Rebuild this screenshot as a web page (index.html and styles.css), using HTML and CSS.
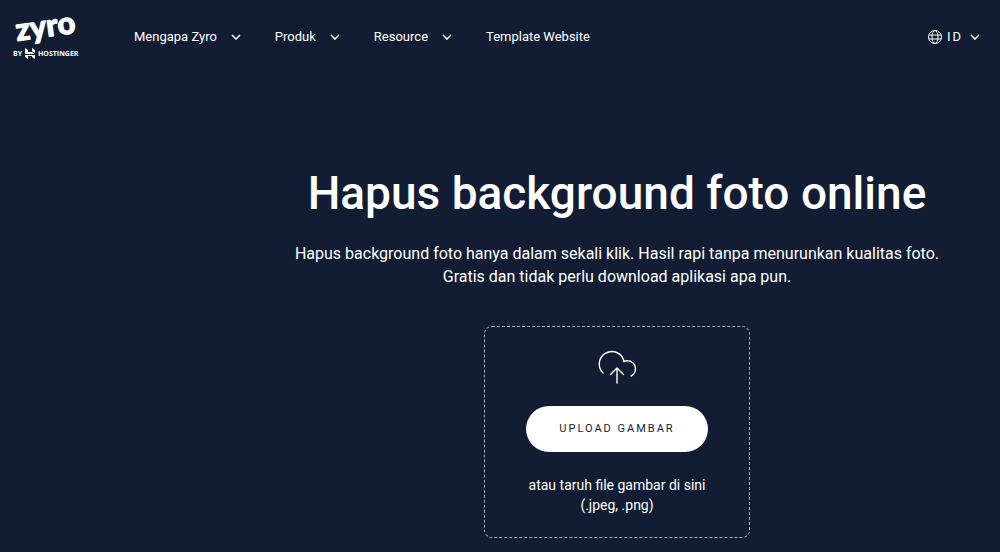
FILE: index.html
```html
<!DOCTYPE html>
<html lang="id">
<head>
	<meta charset="utf-8">
	<meta name="viewport" content="width=device-width, initial-scale=1">
	<title>Hapus background foto online</title>
	<link rel="stylesheet" href="styles.css">
</head>
<body>
	<header class="header">
		<a class="logo" href="#" aria-label="Zyro by Hostinger">
			<svg width="72" height="48" viewBox="0 0 72 48">
				<text class="logo-name" x="5" y="28" transform="rotate(-8 5 28)">zyro</text>
				<text class="logo-by" x="1" y="43">BY</text>
				<path d="M13 35l3 2v2h4l3 2h-10zM20 35l3 2v3l-3-2zM13 42h10v4l-3-2v-1h-4v3l-3-2z"/>
				<text class="logo-by" x="26" y="43">HOSTINGER</text>
			</svg>
		</a>
		<nav class="nav">
			<button class="nav-item" type="button">Mengapa Zyro
				<svg class="chevron" width="10" height="6" viewBox="0 0 10 6"><path d="M1 1l4 4 4-4"/></svg>
			</button>
			<button class="nav-item" type="button">Produk
				<svg class="chevron" width="10" height="6" viewBox="0 0 10 6"><path d="M1 1l4 4 4-4"/></svg>
			</button>
			<button class="nav-item" type="button">Resource
				<svg class="chevron" width="10" height="6" viewBox="0 0 10 6"><path d="M1 1l4 4 4-4"/></svg>
			</button>
			<a class="nav-item" href="#">Template Website</a>
		</nav>
		<button class="language" type="button">
			<svg class="globe" width="16" height="16" viewBox="0 0 16 16">
				<circle cx="8" cy="8" r="6.500"/>
				<ellipse cx="8" cy="8" rx="3" ry="6.500"/>
				<path d="M2 6h12M2 10h12"/>
			</svg>
			<span>ID</span>
			<svg class="chevron" width="10" height="6" viewBox="0 0 10 6"><path d="M1 1l4 4 4-4"/></svg>
		</button>
	</header>
	<main class="hero">
		<h1>Hapus background foto online</h1>
		<p class="intro">Hapus background foto hanya dalam sekali klik. Hasil rapi tanpa menurunkan kualitas foto.<br>Gratis dan tidak perlu download aplikasi apa pun.</p>
		<div class="dropzone">
			<svg class="cloud" width="38" height="36" viewBox="0 0 38 36">
				<path d="M5 24A12.500 12.500 0 1 1 26 12.500A8 8 0 0 1 33 27M19 34V19M12.500 25.500L19 19l6.500 6.500"/>
			</svg>
			<button class="upload" type="button">UPLOAD GAMBAR</button>
			<p class="hint">atau taruh file gambar di sini<br>(.jpeg, .png)</p>
		</div>
	</main>
</body>
</html>
```
FILE: styles.css
```css
body {
	margin: 0;
	background-color: #121d33;
	color: #fff;
	font-family: Roboto, sans-serif;
}
button {
	padding: 0;
	border: 0;
	background: none;
	color: inherit;
	font: inherit;
	cursor: pointer;
}
a {
	color: inherit;
	text-decoration: none;
}
svg {
	display: block;
}
.header {
	display: flex;
	align-items: center;
	height: 74px;
	padding: 0 20px 0 12px;
}
.logo svg {
	fill: #fff;
	overflow: visible;
}
.logo-name {
	font: 900 31px Lato, sans-serif;
	stroke: #fff;
	stroke-width: 1px;
	stroke-linejoin: round;
}
.logo-by {
	font: 700 7px "Open Sans", sans-serif;
}
.nav {
	display: flex;
	gap: 34px;
	margin-left: 50px;
}
.nav-item {
	display: flex;
	align-items: center;
	gap: 14px;
	font-size: 13px;
	line-height: 20px;
	white-space: nowrap;
}
.chevron,
.globe,
.cloud {
	fill: none;
	stroke: #fff;
}
.chevron {
	stroke-width: 1.5;
}
.cloud {
	overflow: visible;
	stroke-width: 1.4;
	stroke-linecap: round;
}
.language {
	display: flex;
	align-items: center;
	margin-left: auto;
	font-size: 13px;
	line-height: 20px;
}
.language span {
	margin: 0 7px 0 4px;
	letter-spacing: 2px;
}
.hero {
	display: flex;
	flex-direction: column;
	align-items: center;
	padding: 91px 0 13px 234px;
	text-align: center;
}
h1 {
	margin: 0;
	font-size: 46px;
	font-weight: 500;
	line-height: 56px;
}
.intro {
	margin: 21px 0 38px;
	font-size: 16px;
	line-height: 23px;
}
.dropzone {
	display: flex;
	flex-direction: column;
	align-items: center;
	box-sizing: border-box;
	width: 266px;
	padding: 22px 20px;
	border: 1px dashed #a5abb7;
	border-radius: 8px;
}
.upload {
	margin: 21px 0 23px;
	padding: 0 33px;
	border-radius: 23px;
	background-color: #fff;
	color: #121d33;
	font-size: 11px;
	line-height: 46px;
	letter-spacing: 2px;
	white-space: nowrap;
}
.hint {
	margin: 0;
	font-size: 14px;
	line-height: 20px;
}
```
